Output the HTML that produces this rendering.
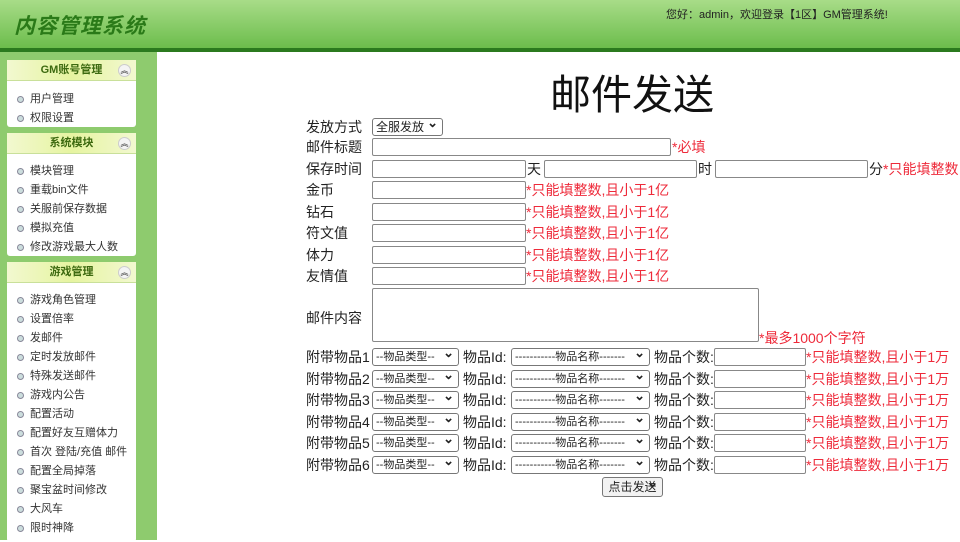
<!DOCTYPE html>
<html><head><meta charset="utf-8"><style>
*{margin:0;padding:0;box-sizing:border-box}
body{width:960px;height:540px;overflow:hidden;background:#fff;font-family:"Liberation Sans","Noto Sans CJK SC",sans-serif;position:relative}
#hd{position:absolute;left:0;top:0;width:960px;height:48px;background:linear-gradient(#a8dc88,#6cbd4c)}
#hd .t{position:absolute;left:14px;top:10px;font-size:21px;font-style:italic;font-weight:bold;color:#2a7a18;letter-spacing:1px;font-family:"Noto Sans CJK SC",sans-serif}
#hd .w{position:absolute;left:666px;top:6px;font-size:11px;color:#222}
#ln{position:absolute;left:0;top:48px;width:960px;height:4px;background:#2b7a1e}
#sb{position:absolute;left:0;top:52px;width:157px;height:488px;background:#8ecb6e}
.p{position:absolute;left:7px;width:129px;background:#fff;border-radius:3px}
.ph{height:21px;background:linear-gradient(90deg,#f2f8d0,#e6f4a0,#f2f8d0);text-align:center;font-size:11px;font-weight:bold;color:#3d6a10;line-height:21px;position:relative;border-bottom:1px solid #c9e09a}
.ph i{position:absolute;right:5px;top:4px;width:13px;height:13px;border-radius:50%;background:#f4f4f4;border:1px solid #ccc;font-style:normal;font-size:8px;line-height:11px;color:#555}
.it{position:absolute;left:10px;font-size:11px;color:#333;white-space:nowrap}
.it:before{content:"";display:inline-block;width:5px;height:5px;border:1px solid #889;border-radius:50%;background:#cdd;margin-right:6px;vertical-align:middle}
.a{position:absolute;font-size:14px;color:#222;white-space:nowrap}
.r{color:#ee2a3a}
.in{position:absolute;height:18px;border:1px solid #888;border-radius:2px;background:#fff}
.sel{position:absolute;height:18px;border:1px solid #777;border-radius:3px;background:#fff;font-size:11px;color:#222;padding-left:3px;line-height:16px;white-space:nowrap}
.sel:after{content:"⌄";position:absolute;right:4px;top:-4px;font-size:13px;font-weight:bold}
</style></head><body>
<div id="hd"><div class="t">内容管理系统</div><div class="w">您好：admin，欢迎登录【1区】GM管理系统!</div></div>
<div id="ln"></div>
<div id="sb">
<div class="p" style="top:8px;height:67px"><div class="ph">GM账号管理<i>︽</i></div>
<div class="it" style="top:30px">用户管理</div><div class="it" style="top:49px">权限设置</div></div>
<div class="p" style="top:81px;height:123px"><div class="ph">系统模块<i>︽</i></div>
<div class="it" style="top:29px">模块管理</div><div class="it" style="top:48px">重载bin文件</div><div class="it" style="top:67px">关服前保存数据</div><div class="it" style="top:86px">模拟充值</div><div class="it" style="top:105px">修改游戏最大人数</div></div>
<div class="p" style="top:210px;height:280px"><div class="ph">游戏管理<i>︽</i></div>
<div class="it" style="top:29px">游戏角色管理</div><div class="it" style="top:48px">设置倍率</div><div class="it" style="top:67px">发邮件</div><div class="it" style="top:86px">定时发放邮件</div><div class="it" style="top:105px">特殊发送邮件</div><div class="it" style="top:124px">游戏内公告</div><div class="it" style="top:143px">配置活动</div><div class="it" style="top:162px">配置好友互赠体力</div><div class="it" style="top:181px">首次 登陆/充值 邮件</div><div class="it" style="top:200px">配置全局掉落</div><div class="it" style="top:219px">聚宝盆时间修改</div><div class="it" style="top:238px">大风车</div><div class="it" style="top:257px">限时神降</div></div>
</div>
<div class="a" style="left:550px;top:61px;font-size:41px;color:#111">邮件发送</div>
<div class="a" style="left:306px;top:117px">发放方式</div>
<div class="sel" style="left:372px;top:118px;width:71px;font-size:12px">全服发放</div>
<div class="a" style="left:306px;top:137px">邮件标题</div><div class="in" style="left:372px;top:138px;width:299px"></div><div class="a r" style="left:672px;top:137px">*必填</div>
<div class="a" style="left:306px;top:159px">保存时间</div><div class="in" style="left:372px;top:160px;width:154px"></div><div class="a" style="left:527px;top:159px">天</div><div class="in" style="left:544px;top:160px;width:153px"></div><div class="a" style="left:698px;top:159px">时</div><div class="in" style="left:715px;top:160px;width:153px"></div><div class="a" style="left:869px;top:159px">分<span class="r">*只能填整数</span></div>
<div class="a" style="left:306px;top:180px">金币</div><div class="in" style="left:372px;top:181px;width:154px"></div><div class="a r" style="left:526px;top:180px">*只能填整数,且小于1亿</div>
<div class="a" style="left:306px;top:202px">钻石</div><div class="in" style="left:372px;top:203px;width:154px"></div><div class="a r" style="left:526px;top:202px">*只能填整数,且小于1亿</div>
<div class="a" style="left:306px;top:223px">符文值</div><div class="in" style="left:372px;top:224px;width:154px"></div><div class="a r" style="left:526px;top:223px">*只能填整数,且小于1亿</div>
<div class="a" style="left:306px;top:245px">体力</div><div class="in" style="left:372px;top:246px;width:154px"></div><div class="a r" style="left:526px;top:245px">*只能填整数,且小于1亿</div>
<div class="a" style="left:306px;top:266px">友情值</div><div class="in" style="left:372px;top:267px;width:154px"></div><div class="a r" style="left:526px;top:266px">*只能填整数,且小于1亿</div>
<div class="a" style="left:306px;top:308px">邮件内容</div><div class="in" style="left:372px;top:288px;width:387px;height:54px"></div><div class="a r" style="left:759px;top:328px">*最多1000个字符</div>
<div id="rows"></div>
<div class="sel" style="left:602px;top:477px;width:61px;height:20px;text-align:center;padding:0;font-size:12px;line-height:18px;background:#f2f2f2">点击发送</div>
<script>
var h='';for(var i=0;i<6;i++){var y=348+i*21.6;
h+='<div class="a" style="left:306px;top:'+(y-1)+'px">附带物品'+(i+1)+'</div><div class="sel" style="left:372px;top:'+y+'px;width:87px">--物品类型--</div><div class="a" style="left:463px;top:'+(y-1)+'px">物品Id:</div><div class="sel" style="left:511px;top:'+y+'px;width:139px">-----------物品名称-------</div><div class="a" style="left:654px;top:'+(y-1)+'px">物品个数:</div><div class="in" style="left:714px;top:'+y+'px;width:92px"></div><div class="a r" style="left:806px;top:'+(y-1)+'px">*只能填整数,且小于1万</div>';}
document.getElementById('rows').innerHTML=h;
</script>
</body></html>
